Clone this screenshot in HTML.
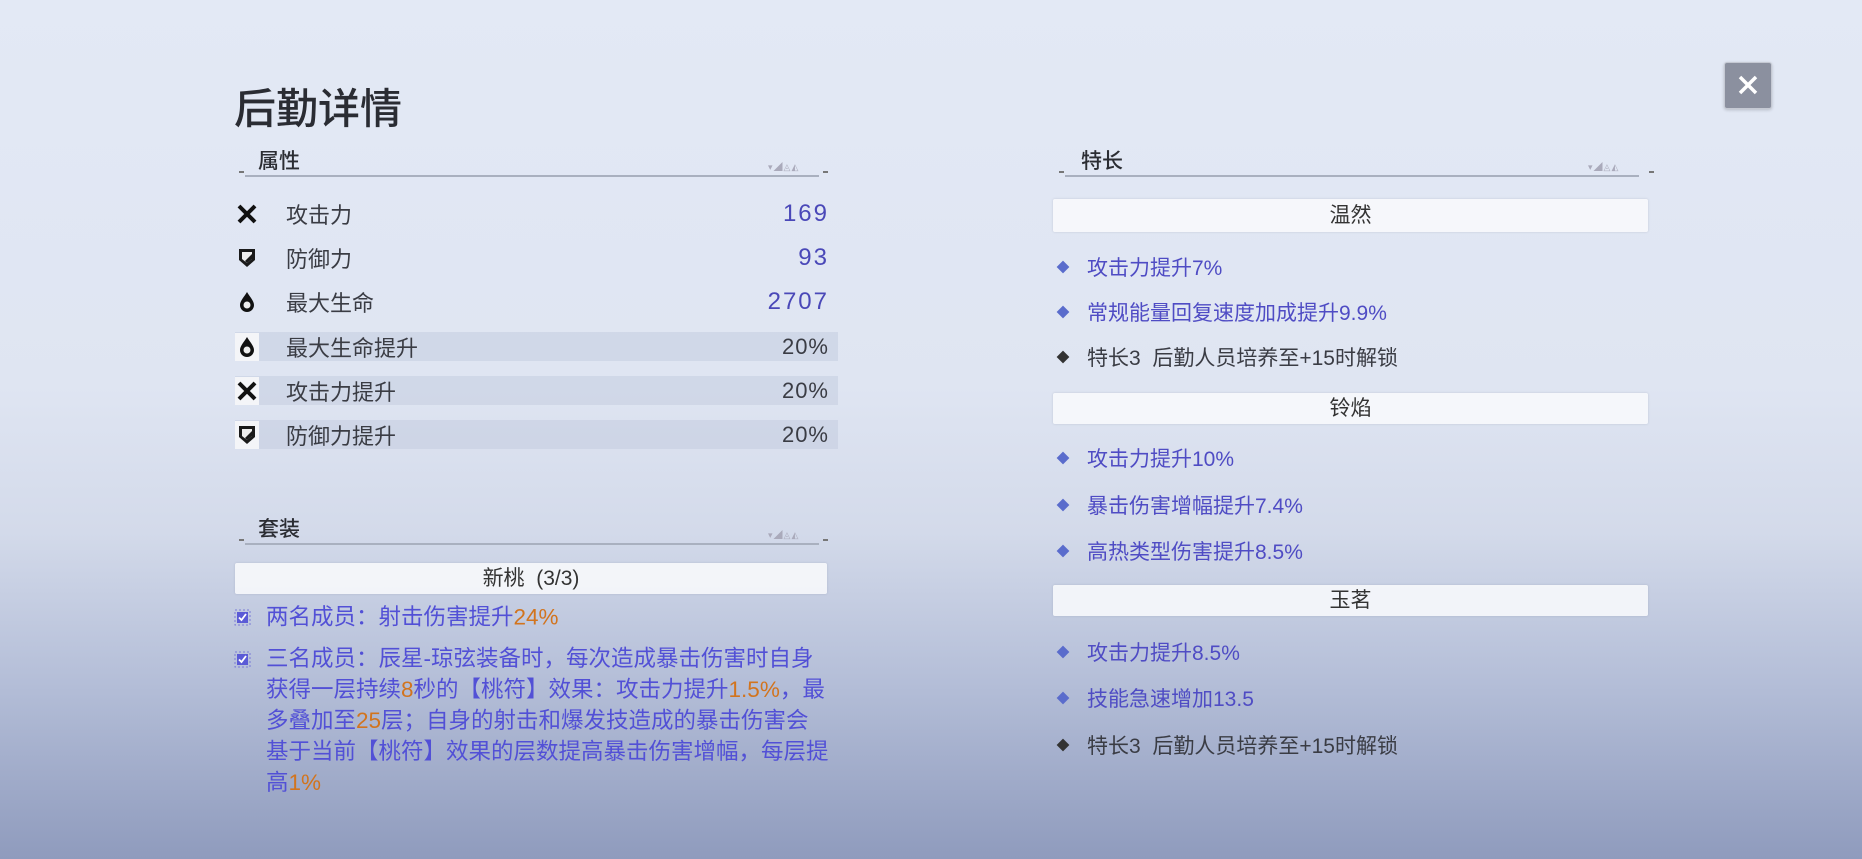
<!DOCTYPE html>
<html><head><meta charset="utf-8"><style>
*{margin:0;padding:0;box-sizing:border-box}
body{width:1862px;height:859px;overflow:hidden;position:relative;font-family:"Liberation Sans","Noto Sans CJK SC",sans-serif;
background:linear-gradient(180deg,#e3e9f5 0%,#dfe5f2 45%,#d3daea 62%,#b3bdd7 80%,#8f9bbd 100%);}
.a{position:absolute;white-space:nowrap}
.t{transform:translateY(-50%)}
.hd{font-size:21px;color:#2b2d33;font-weight:500}
.line{position:absolute;height:2px;background:#a9b0bf}
.dash{position:absolute;width:5px;height:2px;background:#777}
.deco{position:absolute;font-size:9px;color:#aab;letter-spacing:1px}
.lab{font-size:22px;color:#3a3c44}
.val{font-size:24px;color:#4a48b8;text-align:right;letter-spacing:2px}
.pct{font-size:22px;color:#3a3c44;text-align:right;letter-spacing:1px}
.sbar{position:absolute;left:235px;width:603px;height:29px;background:rgba(190,200,220,0.45)}
.wbar{position:absolute;background:rgba(248,249,252,0.88);box-shadow:0 0 2px rgba(120,130,150,0.3);text-align:center;font-size:21px;color:#333;border-radius:2px}
.item{font-size:21px;color:#4f4cc4}
.dk{color:#3a3c44}
.o{color:#d2741e}
.dia{position:absolute;width:9px;height:9px;background:#5a6ccc;transform:translate(-50%,-50%) rotate(45deg)}
.dia.k{background:#333}
.txt2{font-size:22.5px;color:#5250d6;line-height:31px}
.cb{position:absolute}
</style></head><body>
<div class="a t" style="left:234px;top:106px;font-size:42px;color:#2a2c33;font-weight:500">后勤详情</div>

<!-- 属性 -->
<div class="dash" style="left:239px;top:171px"></div>
<div class="a t hd" style="left:258px;top:160px">属性</div>
<div class="line" style="left:245px;top:175px;width:574px"></div>
<div class="deco" style="left:768px;top:160px">▾◢◬◭</div>
<div class="dash" style="left:823px;top:171px"></div>

<div class="sbar" style="top:332px"></div>
<div class="sbar" style="top:376px"></div>
<div class="sbar" style="top:420px"></div>

<svg class="a" style="left:236px;top:203px" width="22" height="22" viewBox="0 0 22 22"><path d="M3 3L19 19M19 3L3 19" stroke="#111" stroke-width="4"/></svg>
<svg class="a" style="left:237px;top:247px" width="20" height="22" viewBox="0 0 20 22"><path d="M2 2H18V13L10 20L2 13Z" fill="#1a1a1a"/><path d="M5 5H15V12L10 16L5 12Z" fill="#eee"/><path d="M8 14L15 7V12L10 16Z" fill="#1a1a1a"/></svg>
<svg class="a" style="left:238px;top:291px" width="18" height="22" viewBox="0 0 18 22"><path d="M9 1C6 6 2 10 2 14a7 7 0 0 0 14 0C16 10 12 6 9 1Z" fill="#111"/><circle cx="9" cy="14" r="3.5" fill="#eee"/></svg>
<div class="a" style="left:235px;top:333px;width:24px;height:28px;background:#f4f5f8"></div>
<svg class="a" style="left:238px;top:336px" width="18" height="22" viewBox="0 0 18 22"><path d="M9 1C6 6 2 10 2 14a7 7 0 0 0 14 0C16 10 12 6 9 1Z" fill="#111"/><circle cx="9" cy="14" r="3.5" fill="#eee"/></svg>
<div class="a" style="left:235px;top:377px;width:24px;height:28px;background:#f4f5f8"></div>
<svg class="a" style="left:236px;top:380px" width="22" height="22" viewBox="0 0 22 22"><path d="M3 3L19 19M19 3L3 19" stroke="#111" stroke-width="4"/></svg>
<div class="a" style="left:235px;top:421px;width:24px;height:28px;background:#f4f5f8"></div>
<svg class="a" style="left:237px;top:424px" width="20" height="22" viewBox="0 0 20 22"><path d="M2 2H18V13L10 20L2 13Z" fill="#1a1a1a"/><path d="M5 5H15V12L10 16L5 12Z" fill="#eee"/><path d="M8 14L15 7V12L10 16Z" fill="#1a1a1a"/></svg>

<div class="a t lab" style="left:286px;top:214px">攻击力</div>
<div class="a t lab" style="left:286px;top:258px">防御力</div>
<div class="a t lab" style="left:286px;top:302px">最大生命</div>
<div class="a t lab" style="left:286px;top:347px">最大生命提升</div>
<div class="a t lab" style="left:286px;top:391px">攻击力提升</div>
<div class="a t lab" style="left:286px;top:435px">防御力提升</div>
<div class="a t val" style="right:1033px;top:214px">169</div>
<div class="a t val" style="right:1033px;top:258px">93</div>
<div class="a t val" style="right:1033px;top:302px">2707</div>
<div class="a t pct" style="right:1033px;top:347px">20%</div>
<div class="a t pct" style="right:1033px;top:391px">20%</div>
<div class="a t pct" style="right:1033px;top:435px">20%</div>

<!-- 套装 -->
<div class="dash" style="left:239px;top:539px"></div>
<div class="a t hd" style="left:258px;top:528px">套装</div>
<div class="line" style="left:245px;top:543px;width:574px"></div>
<div class="deco" style="left:768px;top:528px">▾◢◬◭</div>
<div class="dash" style="left:823px;top:539px"></div>
<div class="wbar" style="left:235px;top:563px;width:592px;height:31px;line-height:31px">新桃&nbsp;&nbsp;(3/3)</div>
<svg class="cb" style="left:234px;top:609px" width="17" height="17" viewBox="0 0 17 17"><rect x="1" y="1" width="15" height="15" fill="none" stroke="#7a7ad6" stroke-dasharray="2 2"/><rect x="3" y="3" width="11" height="11" fill="#5b5bd6"/><path d="M5 8.5L7.5 11L12 5" stroke="#fff" stroke-width="1.8" fill="none"/></svg>
<div class="a t txt2" style="left:266px;top:617px">两名成员：射击伤害提升<span class="o">24%</span></div>
<svg class="cb" style="left:234px;top:651px" width="17" height="17" viewBox="0 0 17 17"><rect x="1" y="1" width="15" height="15" fill="none" stroke="#7a7ad6" stroke-dasharray="2 2"/><rect x="3" y="3" width="11" height="11" fill="#5b5bd6"/><path d="M5 8.5L7.5 11L12 5" stroke="#fff" stroke-width="1.8" fill="none"/></svg>
<div class="a txt2" style="left:266px;top:643px">三名成员：辰星-琼弦装备时，每次造成暴击伤害时自身<br>获得一层持续<span class="o">8</span>秒的【桃符】效果：攻击力提升<span class="o">1.5%</span>，最<br>多叠加至<span class="o">25</span>层；自身的射击和爆发技造成的暴击伤害会<br>基于当前【桃符】效果的层数提高暴击伤害增幅，每层提<br>高<span class="o">1%</span></div>

<!-- 特长 -->
<div class="dash" style="left:1059px;top:171px"></div>
<div class="a t hd" style="left:1081px;top:160px">特长</div>
<div class="line" style="left:1065px;top:175px;width:574px"></div>
<div class="deco" style="left:1588px;top:160px">▾◢◬◭</div>
<div class="dash" style="left:1649px;top:171px"></div>

<div class="wbar" style="left:1053px;top:199px;width:595px;height:33px;line-height:33px">温然</div>
<div class="dia" style="left:1063px;top:267px"></div><div class="a t item" style="left:1087px;top:267px">攻击力提升7%</div>
<div class="dia" style="left:1063px;top:312px"></div><div class="a t item" style="left:1087px;top:312px">常规能量回复速度加成提升9.9%</div>
<div class="dia k" style="left:1063px;top:357px"></div><div class="a t item dk" style="left:1087px;top:357px">特长3&nbsp; 后勤人员培养至+15时解锁</div>

<div class="wbar" style="left:1053px;top:393px;width:595px;height:31px;line-height:31px">铃焰</div>
<div class="dia" style="left:1063px;top:458px"></div><div class="a t item" style="left:1087px;top:458px">攻击力提升10%</div>
<div class="dia" style="left:1063px;top:505px"></div><div class="a t item" style="left:1087px;top:505px">暴击伤害增幅提升7.4%</div>
<div class="dia" style="left:1063px;top:551px"></div><div class="a t item" style="left:1087px;top:551px">高热类型伤害提升8.5%</div>

<div class="wbar" style="left:1053px;top:585px;width:595px;height:31px;line-height:31px">玉茗</div>
<div class="dia" style="left:1063px;top:652px"></div><div class="a t item" style="left:1087px;top:652px">攻击力提升8.5%</div>
<div class="dia" style="left:1063px;top:698px"></div><div class="a t item" style="left:1087px;top:698px">技能急速增加13.5</div>
<div class="dia k" style="left:1063px;top:745px"></div><div class="a t item dk" style="left:1087px;top:745px">特长3&nbsp; 后勤人员培养至+15时解锁</div>

<!-- close -->
<div class="a" style="left:1724px;top:62px;width:48px;height:47px;background:#8b909f;border:1px solid #c5c9d3;border-radius:3px;box-shadow:0 1px 3px rgba(0,0,0,0.2)"></div>
<svg class="a" style="left:1737px;top:74px" width="22" height="22" viewBox="0 0 22 22"><path d="M3 3L19 19M19 3L3 19" stroke="#fff" stroke-width="3.5"/></svg>
</body></html>
